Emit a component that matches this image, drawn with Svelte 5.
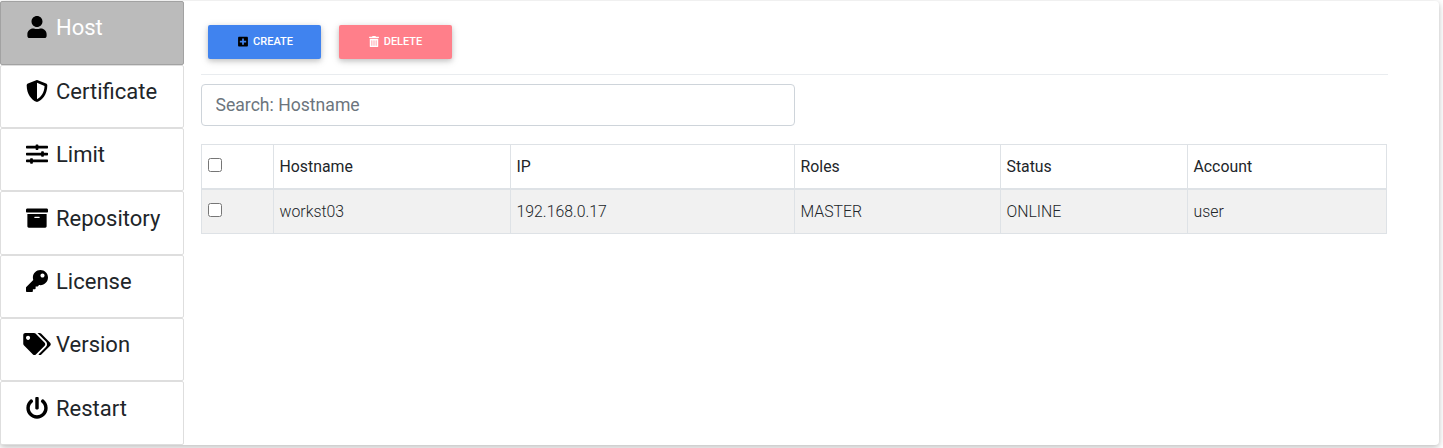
<script>
  const menu = [
    { label: 'Host', w: 448, d: 'M224 256c70.7 0 128-57.3 128-128S294.7 0 224 0 96 57.3 96 128s57.3 128 128 128zm89.6 32h-16.7c-22.2 10.2-46.9 16-72.9 16s-50.6-5.8-72.9-16h-16.7C60.2 288 0 348.2 0 422.4V464c0 26.5 21.5 48 48 48h352c26.5 0 48-21.5 48-48v-41.6c0-74.2-60.2-134.4-134.4-134.4z' },
    { label: 'Certificate', w: 512, d: 'M466.5 83.7l-192-80a48.15 48.15 0 0 0-36.9 0l-192 80C27.7 91.1 16 108.6 16 128c0 198.5 114.5 335.7 221.5 380.3 11.8 4.9 25.1 4.9 36.9 0C360.1 472.6 496 349.3 496 128c0-19.4-11.7-36.9-29.5-44.3zM256.1 446.3l-.1-381 175.9 73.3c-3.3 151.4-82.1 261.1-175.8 307.7z' },
    { label: 'Limit', w: 512, d: 'M496 384H160v-16c0-8.8-7.2-16-16-16h-32c-8.8 0-16 7.2-16 16v16H16c-8.8 0-16 7.2-16 16v32c0 8.8 7.2 16 16 16h80v16c0 8.8 7.2 16 16 16h32c8.8 0 16-7.2 16-16v-16h336c8.8 0 16-7.2 16-16v-32c0-8.8-7.2-16-16-16zm0-160h-80v-16c0-8.8-7.2-16-16-16h-32c-8.8 0-16 7.2-16 16v16H16c-8.8 0-16 7.2-16 16v32c0 8.8 7.2 16 16 16h336v16c0 8.8 7.2 16 16 16h32c8.8 0 16-7.2 16-16v-16h80c8.8 0 16-7.2 16-16v-32c0-8.8-7.2-16-16-16zm0-160H288V48c0-8.8-7.2-16-16-16h-32c-8.8 0-16 7.2-16 16v16H16C7.2 64 0 71.2 0 80v32c0 8.8 7.2 16 16 16h208v16c0 8.8 7.2 16 16 16h32c8.8 0 16-7.2 16-16v-16h208c8.8 0 16-7.2 16-16V80c0-8.8-7.2-16-16-16z' },
    { label: 'Repository', w: 512, d: 'M32 448c0 17.7 14.3 32 32 32h384c17.7 0 32-14.3 32-32V160H32v288zm160-212c0-6.6 5.4-12 12-12h104c6.6 0 12 5.4 12 12v8c0 6.6-5.4 12-12 12H204c-6.6 0-12-5.4-12-12v-8zM480 32H32C14.3 32 0 46.3 0 64v48c0 8.8 7.2 16 16 16h480c8.8 0 16-7.2 16-16V64c0-17.7-14.3-32-32-32z' },
    { label: 'License', w: 512, d: 'M512 176.001C512 273.203 433.202 352 336 352c-11.22 0-22.19-1.062-32.827-3.069l-24.012 27.014A23.999 23.999 0 0 1 261.223 384H224v40c0 13.255-10.745 24-24 24h-40v40c0 13.255-10.745 24-24 24H24c-13.255 0-24-10.745-24-24v-78.059c0-6.365 2.529-12.47 7.029-16.971l161.802-161.802C163.108 213.814 160 195.271 160 176 160 78.798 238.797.001 335.999 0 433.488-.001 512 78.511 512 176.001zM336 128c0 26.51 21.49 48 48 48s48-21.49 48-48-21.49-48-48-48-48 21.49-48 48z' },
    { label: 'Version', w: 640, d: 'M497.941 225.941L286.059 14.059A48 48 0 0 0 252.118 0H48C21.49 0 0 21.49 0 48v204.118a48 48 0 0 0 14.059 33.941l211.882 211.882c18.744 18.745 49.136 18.746 67.882 0l204.118-204.118c18.745-18.745 18.745-49.137 0-67.882zM112 160c-26.51 0-48-21.49-48-48s21.49-48 48-48 48 21.49 48 48-21.49 48-48 48zm513.941 133.823L421.823 497.941c-18.745 18.745-49.137 18.745-67.882 0l-.36-.36L527.64 323.522c16.999-16.999 26.36-39.6 26.36-63.64s-9.362-46.641-26.36-63.64L331.397 0h48.721a48 48 0 0 1 33.941 14.059l211.882 211.882c18.745 18.745 18.745 49.137 0 67.882z' },
    { label: 'Restart', w: 512, d: 'M400 54.1c63 45 104 118.6 104 201.9 0 136.8-110.8 247.7-247.5 248C120 504.3 8.2 393 8 256.4 7.9 173.1 48.9 99.3 111.8 54.2c11.7-8.3 28-4.8 35 7.7L162.6 90c5.9 10.5 3.1 23.8-6.6 31-41.5 30.8-68 79.6-68 134.9-.1 92.3 74.5 168.1 168 168.1 91.6 0 168.6-74.2 168-169.1-.3-51.8-24.7-101.8-68.1-134-9.7-7.2-12.4-20.5-6.5-30.9l15.8-28.1c7-12.4 23.2-16.1 34.8-7.8zM296 264V24c0-13.3-10.7-24-24-24h-32c-13.3 0-24 10.7-24 24v240c0 13.3 10.7 24 24 24h32c13.3 0 24-10.7 24-24z' }
  ];
  const columns = ['Hostname', 'IP', 'Roles', 'Status', 'Account'];
  const hosts = [['workst03', '192.168.0.17', 'MASTER', 'ONLINE', 'user']];
  let active = $state('Host');
</script>

<div class="card">
  <nav>
    {#each menu as item}
      <button class="item" class:active={active === item.label} onclick={() => (active = item.label)}>
        <svg class="icon" viewBox="0 0 {item.w} 512" aria-hidden="true"><path d={item.d} /></svg>
        <span>{item.label}</span>
      </button>
    {/each}
  </nav>
  <main>
    <div class="toolbar">
      <button class="btn create">
        <svg viewBox="0 0 448 512" aria-hidden="true"><path d="M400 32H48C21.5 32 0 53.5 0 80v352c0 26.5 21.5 48 48 48h352c26.5 0 48-21.5 48-48V80c0-26.5-21.5-48-48-48zm-32 252c0 6.6-5.4 12-12 12h-92v92c0 6.6-5.4 12-12 12h-56c-6.6 0-12-5.4-12-12v-92H92c-6.6 0-12-5.4-12-12v-56c0-6.6 5.4-12 12-12h92v-92c0-6.6 5.4-12 12-12h56c6.6 0 12 5.4 12 12v92h92c6.6 0 12 5.4 12 12v56z" /></svg>
        <span>CREATE</span>
      </button>
      <button class="btn delete">
        <svg viewBox="0 0 448 512" aria-hidden="true"><path d="M32 464a48 48 0 0 0 48 48h288a48 48 0 0 0 48-48V128H32zm272-256a16 16 0 0 1 32 0v224a16 16 0 0 1-32 0zm-96 0a16 16 0 0 1 32 0v224a16 16 0 0 1-32 0zm-96 0a16 16 0 0 1 32 0v224a16 16 0 0 1-32 0zM432 32H312l-9.4-18.7A24 24 0 0 0 281.1 0H166.8a23.72 23.72 0 0 0-21.4 13.3L136 32H16A16 16 0 0 0 0 48v32a16 16 0 0 0 16 16h416a16 16 0 0 0 16-16V48a16 16 0 0 0-16-16z" /></svg>
        <span>DELETE</span>
      </button>
    </div>
    <input class="search" type="text" placeholder="Search: Hostname" />
    <table>
      <colgroup>
        <col class="c0" /><col class="c1" /><col class="c2" /><col class="c3" /><col class="c4" /><col class="c5" />
      </colgroup>
      <thead>
        <tr>
          <th><input type="checkbox" /></th>
          {#each columns as c}<th>{c}</th>{/each}
        </tr>
      </thead>
      <tbody>
        {#each hosts as row}
          <tr>
            <td><input type="checkbox" /></td>
            {#each row as cell}<td>{cell}</td>{/each}
          </tr>
        {/each}
      </tbody>
    </table>
  </main>
</div>

<style>
  :global(body) { background: #fff; }
  :global(#app) { display: flow-root; height: 448px; overflow: hidden; }
  * { box-sizing: border-box; }
  .card {
    display: flex;
    width: 1439px;
    height: 444px;
    margin-top: 1px;
    background: #fff;
    border-radius: 4px;
    box-shadow: 0 2px 5px rgba(0, 0, 0, 0.16), 0 2px 10px rgba(0, 0, 0, 0.12);
    font-family: Roboto, sans-serif;
    color: #212529;
  }
  button, input { font-family: inherit; }
  nav { width: 184px; display: grid; grid-template-rows: 64px 63px 63px 64px 63px 63px 64px; }
  .item {
    display: flex;
    align-items: flex-start;
    gap: 5px;
    padding: 13px 0 0 22px;
    border: 1px solid #dedede;
    border-radius: 2px;
    background: #fff;
    color: #212529;
    font-size: 22px;
    line-height: 25px;
    text-align: left;
  }
  .item:nth-child(4), .item:nth-child(7) { padding-top: 14px; }
  .item.active { background: #bbb; border-color: #a2a2a2; color: #fff; }
  .icon { width: 28px; height: 22px; margin-top: 0.7px; fill: #000; flex: none; }
  main { padding: 24px 0 0 17px; width: 1204px; }
  .toolbar {
    display: flex;
    gap: 18px;
    padding-left: 7px;
    height: 50px;
    border-bottom: 1px solid #e9ecef;
    margin-bottom: 9px;
  }
  .btn {
    display: flex;
    align-items: center;
    justify-content: center;
    gap: 5px;
    width: 113px;
    height: 34px;
    padding: 0 0 1px 2px;
    border: 0;
    border-radius: 2px;
    color: #fff;
    font-size: 11px;
    font-weight: 500;
    box-shadow: 0 2px 5px rgba(0, 0, 0, 0.16), 0 2px 10px rgba(0, 0, 0, 0.12);
  }
  .btn svg { width: 10px; height: 11.26px; }
  .create { background: #4083ef; }
  .create svg { fill: #000; }
  .delete { background: #ff7f8a; padding-left: 0; }
  .delete svg { fill: #fff; }
  .search {
    display: block;
    width: 594px;
    height: 42px;
    padding: 0 13.5px;
    border: 1px solid #ced4da;
    border-radius: 4px;
    font-size: 17.6px;
    margin: 0 0 18px;
  }
  .search::placeholder { color: #6c757d; }
  table {
    width: 1186px;
    table-layout: fixed;
    border-collapse: collapse;
    font-size: 15.84px;
  }
  .c0 { width: 72px; }
  .c1 { width: 237px; }
  .c2 { width: 284px; }
  .c3 { width: 206px; }
  .c4 { width: 187px; }
  .c5 { width: 199px; }
  th, td { height: 45px; padding: 0 6px 0 5.5px; border: 1px solid #dee2e6; text-align: left; }
  th { height: 44px; font-weight: 400; border-bottom-width: 2px; }
  td { font-weight: 300; }
  tbody tr { background: #f1f1f1; }
  input[type='checkbox'] { display: block; width: 14px; height: 14px; margin: 0 0 2px 0.5px; }
</style>
